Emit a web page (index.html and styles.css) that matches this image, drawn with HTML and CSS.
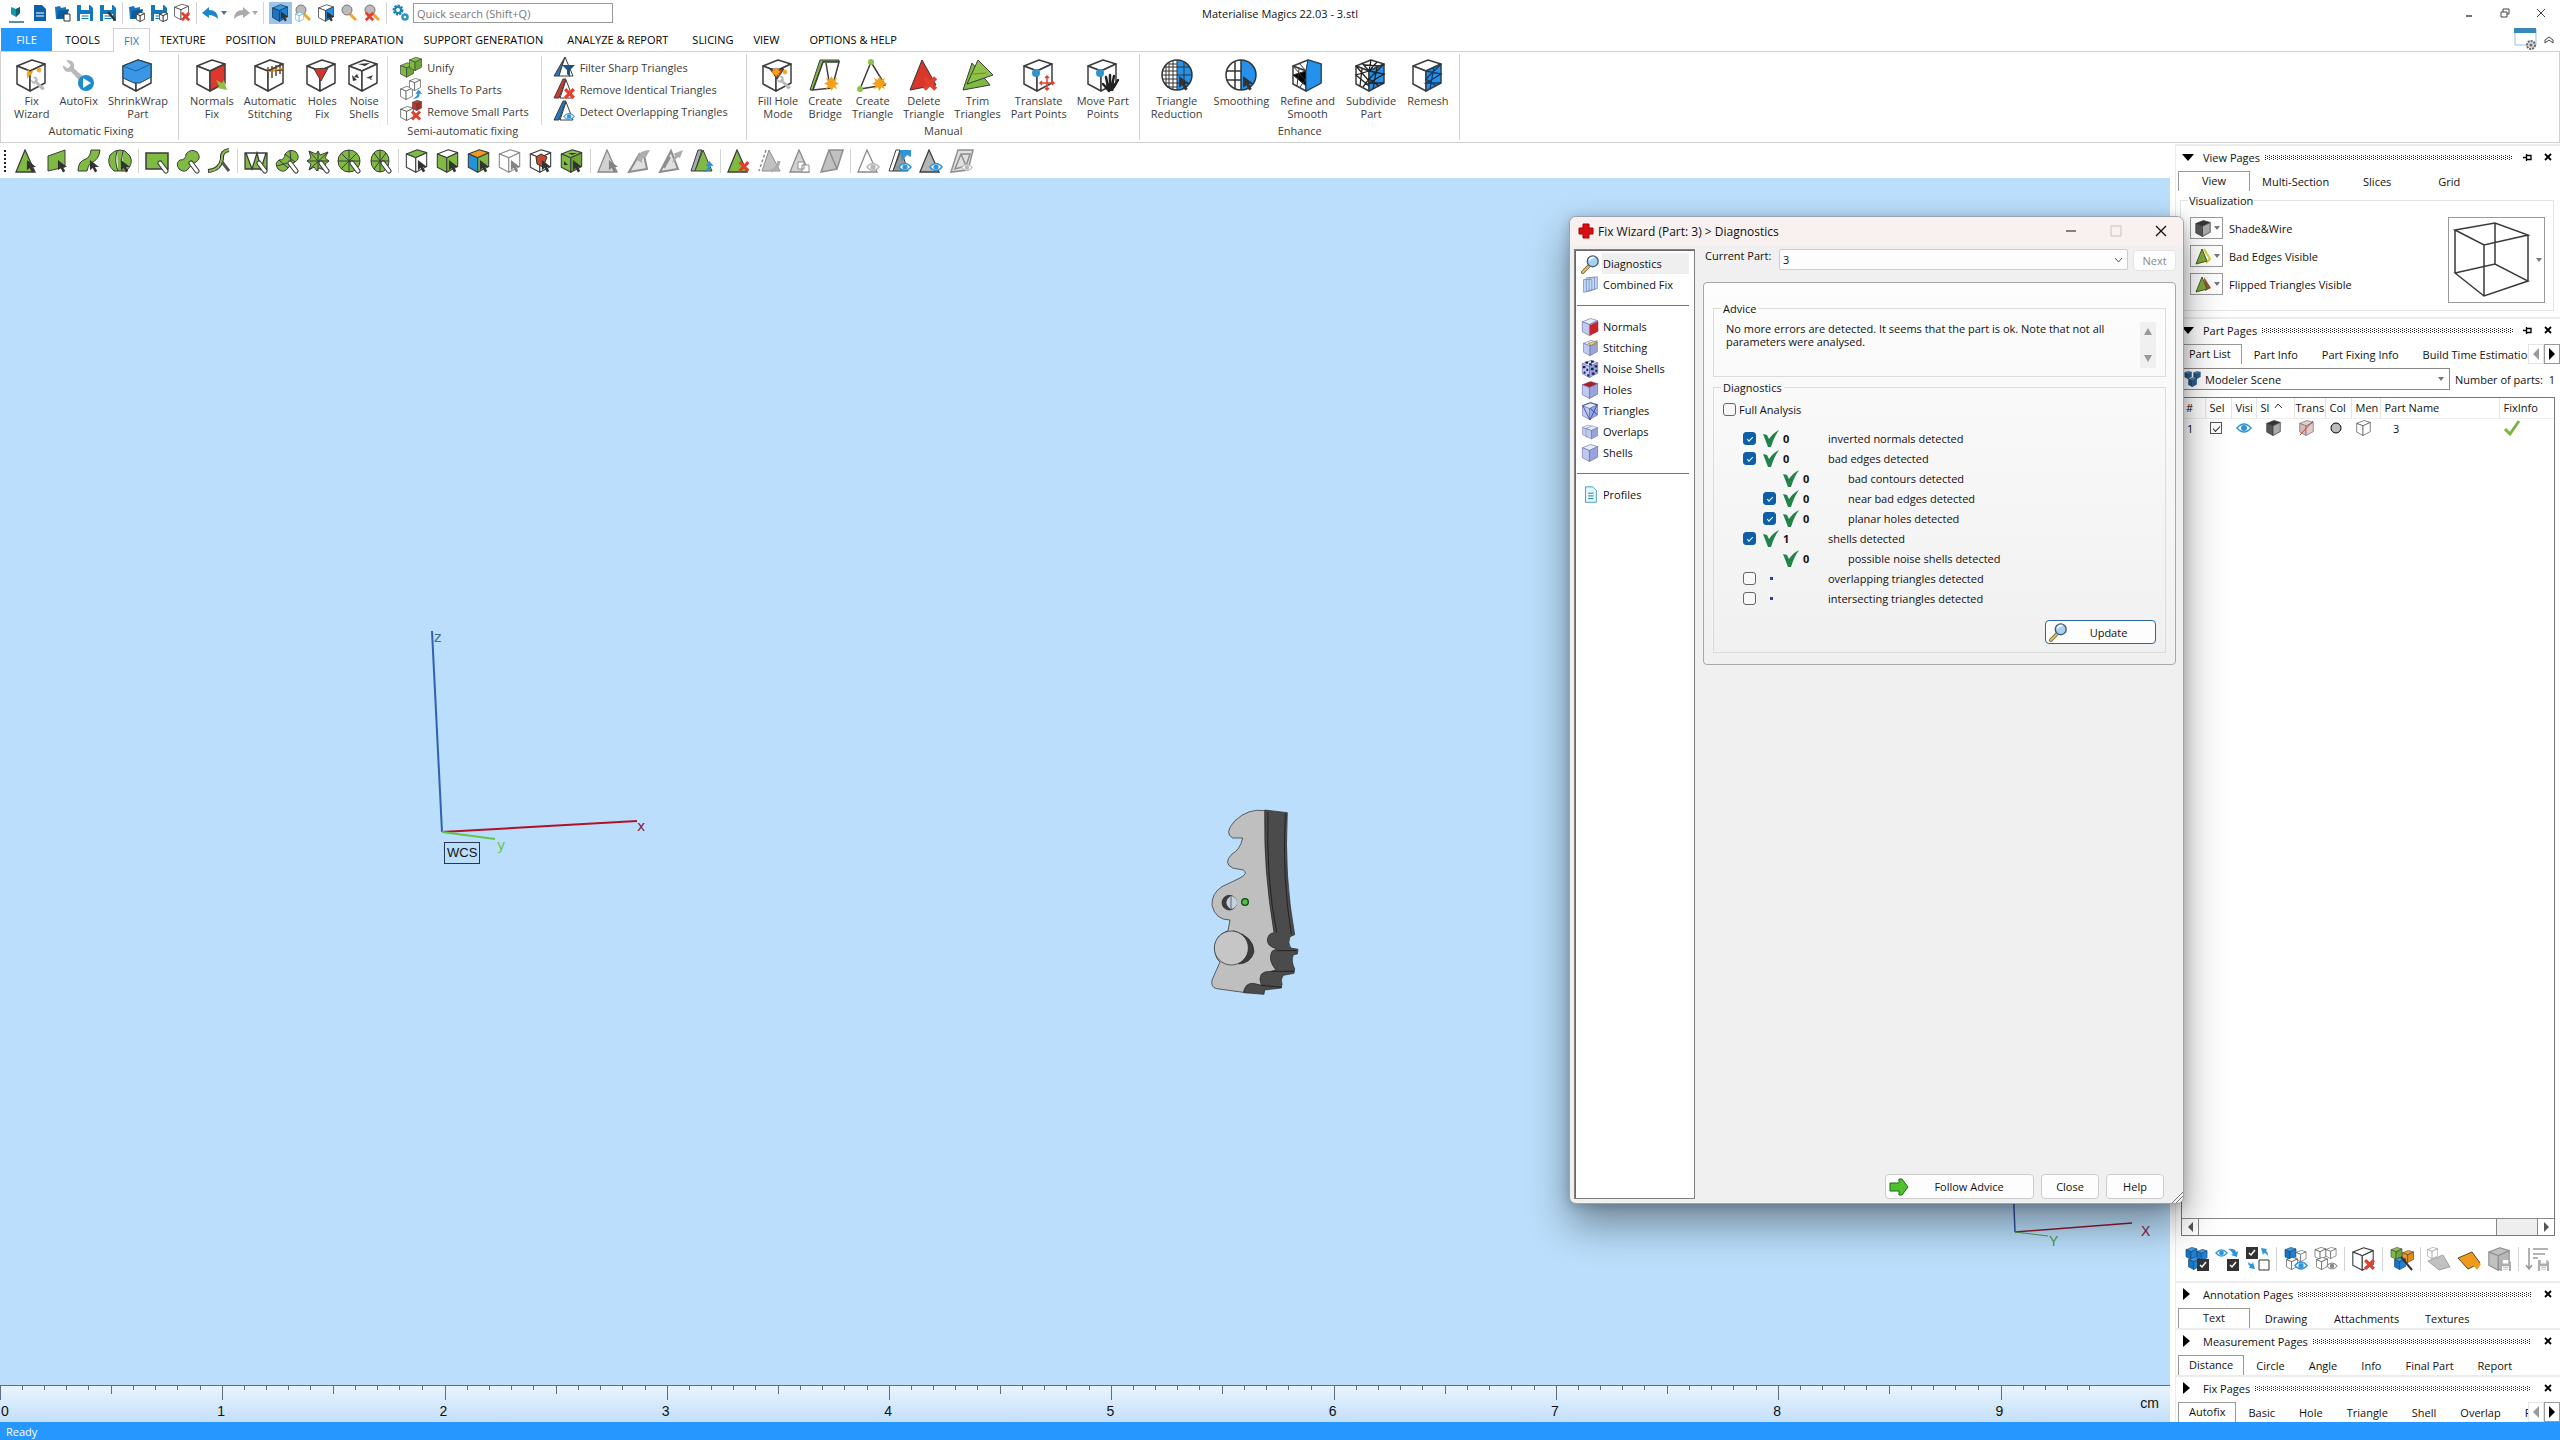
FILE: index.html
```html
<!DOCTYPE html>
<html lang="en">
<head>
    <meta charset="UTF-8">
    <meta name="viewport" content="width=device-width, initial-scale=1.0">
    <title>Materialise Magics 22.03 - 3.stl</title>
    <link rel="stylesheet" href="styles.css">
</head>
<body>
    <!-- Shared icon shapes -->
    <svg class="sprite" aria-hidden="true">
        <symbol id="cube" viewBox="0 0 30 33">
            <g stroke="var(--line, #3d3d3d)" stroke-width="var(--sw, 1.5)" stroke-linejoin="round">
                <path d="M16 1 L29 5 L14 12 L1 7 Z" fill="var(--top, #fff)"/>
                <path d="M1 7 L14 12 V32 L1 25 Z" fill="var(--left, #fff)"/>
                <path d="M14 12 L29 5 V24 L14 32 Z" fill="var(--right, #fff)"/>
            </g>
        </symbol>
        <symbol id="cursor" viewBox="0 0 12 14">
            <path d="M1 0 V11 L4 8.500 L6.500 13.500 L9 12 L6.500 7.500 H11 Z" fill="#333"/>
        </symbol>
        <symbol id="pen" viewBox="0 0 12 14">
            <path d="M3 3 L9 11" stroke="#333" stroke-width="5" stroke-linecap="round"/>
            <path d="M3 3 L9 11" stroke="#fff" stroke-width="3" stroke-linecap="round"/>
        </symbol>
        <symbol id="cross" viewBox="0 0 12 12">
            <path d="M2 2 L10 10 M10 2 L2 10" stroke="#e2402f" stroke-width="3"/>
        </symbol>
        <symbol id="star" viewBox="0 0 12 12">
            <path d="M6 0 L7.500 3 L10.500 1.500 L9 4.500 L12 6 L9 7.500 L10.500 10.500 L7.500 9 L6 12 L4.500 9 L1.500 10.500 L3 7.500 L0 6 L3 4.500 L1.500 1.500 L4.500 3 Z" fill="#f4a11c"/>
        </symbol>
        <symbol id="wrench" viewBox="0 0 16 16">
            <path d="M2 1 C5 0 8 2 7 6 L15 13 L12 15.500 L5 8 C2 9 0 7 0 4 L3 6 L5 4 Z" fill="#b9b9b9"/>
        </symbol>
        <symbol id="eye" viewBox="0 0 16 10">
            <path d="M1 5 Q8 -3 15 5 Q8 13 1 5 Z" fill="#fff" stroke="var(--eye, #2f95d8)" stroke-width="1.500"/>
            <circle cx="8" cy="5" r="3" fill="var(--eye, #2f95d8)"/>
        </symbol>
        <symbol id="tri" viewBox="0 0 24 24">
            <path d="M10 1 L1 23 H20 Z" fill="var(--fill, #7fba42)" stroke="var(--line, #3d3d3d)" stroke-width="1.300"/>
        </symbol>
        <symbol id="disk" viewBox="0 0 16 16">
            <path d="M0 0 H13 L16 3 V16 H0 Z" fill="var(--disk, #1279bd)"/>
            <path d="M4 0 H12 V5 H4 Z M3 9 H13 V16 H3 Z" fill="#fff"/>
            <path d="M4.500 11 H11.500 M4.500 13.500 H11.500" stroke="var(--disk, #1279bd)"/>
        </symbol>
        <symbol id="folder" viewBox="0 0 16 16">
            <path d="M1 3 L6 2 L7 4 L12 3 V6 H15 L12 15 H2 Z" fill="#1575bd"/>
            <path d="M4 7 L15 5 L12 14 L3 15 Z" fill="#0c5c9c"/>
        </symbol>
        <symbol id="lens" viewBox="0 0 16 18">
            <path d="M9 10 L15 16" stroke="#eda62b" stroke-width="3"/>
            <circle cx="6" cy="6" r="5" fill="var(--glass, #bbb)" stroke="#777"/>
        </symbol>
        <symbol id="magnifier" viewBox="0 0 20 22">
            <path d="M9 13 L2 20" stroke="#7d6b35" stroke-width="4" stroke-linecap="round"/>
            <path d="M9 13 L2 20" stroke="#e3c376" stroke-width="2" stroke-linecap="round"/>
            <circle cx="13" cy="8" r="6" fill="#a8d3f0" stroke="#44597a" stroke-width="1.500"/>
            <path d="M9 7 Q11 3 15 4" stroke="#fff" stroke-width="1.500" fill="none"/>
        </symbol>
        <symbol id="tick" viewBox="0 0 16 17">
            <path d="M0 4 L4 5 L6 9 Q10 3 16 0 Q11 7 8 17 H5 Z" fill="#23824a"/>
        </symbol>
        <symbol id="arrow" viewBox="0 0 12 12">
            <path d="M1 11 Q10 11 9 5 H12 L8 0 L4 5 H6.500 Q6.500 8 1 11 Z" fill="var(--arrow, #2f95d8)"/>
        </symbol>
        <symbol id="pin" viewBox="0 0 9 7">
            <path d="M0 3.500 H3 M3.500 0 V7 M4 1.500 H8 V5.500 H4" stroke="#000" stroke-width="1.300" fill="none"/>
        </symbol>
        <symbol id="close" viewBox="0 0 8 8">
            <path d="M1 1 L7 7 M7 1 L1 7" stroke="#000" stroke-width="1.800"/>
        </symbol>
        <symbol id="ticks" viewBox="0 0 100 14" preserveAspectRatio="none">
            <path d="M0 0 V14 M10 0 V4 M20 0 V4 M30 0 V4 M40 0 V4 M50 0 V8 M60 0 V4 M70 0 V4 M80 0 V4 M90 0 V4" stroke="#5c6f7c" vector-effect="non-scaling-stroke" shape-rendering="crispEdges"/>
        </symbol>
        <symbol id="ticks-last" viewBox="0 0 100 14" preserveAspectRatio="none">
            <path d="M0 0 V14 M10 0 V4 M20 0 V4 M30 0 V4 M40 0 V4" stroke="#5c6f7c" vector-effect="non-scaling-stroke" shape-rendering="crispEdges"/>
        </symbol>
    </svg>

    <div class="app">
        <header class="titlebar">
            <div class="quick">
                <svg viewBox="0 0 17 20"><path d="M1 19 H16" stroke="#1d6a8c" stroke-width="1.500"/><path d="M3 4 L8 6 L12 4 V10 L8 14 L3 11 Z" fill="#1797a8"/><path d="M8 6 L12 4 V10 L8 14 Z" fill="#0c5f78"/></svg>
                <svg viewBox="0 0 17 20"><path d="M3 2 H11 L15 6 V18 H3 Z" fill="#0f5ea8"/><path d="M5 10 H13 M5 13 H13" stroke="#fff"/></svg>
                <svg viewBox="0 0 17 20"><use href="#folder" width="16" height="18"/><path d="M10 11 H16 V18 H10 Z" fill="#fff" stroke="#333"/></svg>
                <svg viewBox="0 0 17 20"><use href="#disk" y="2" width="16" height="16"/></svg>
                <svg viewBox="0 0 17 20"><use href="#disk" y="2" width="16" height="16"/><path d="M8 9 L15 17" stroke="#333" stroke-width="2.500"/></svg>
                <span class="sep"></span>
                <svg viewBox="0 0 17 20"><use href="#folder" width="16" height="18"/><use href="#cube" x="8" y="9" width="9" height="10" class="thick"/></svg>
                <svg viewBox="0 0 17 20"><use href="#disk" y="2" width="16" height="16"/><use href="#cube" x="8" y="9" width="9" height="10" class="thick"/></svg>
                <svg viewBox="0 0 17 20"><use href="#cube" width="15" height="18"/><use href="#cross" x="6" y="8" width="11" height="11"/></svg>
                <span class="sep"></span>
                <svg viewBox="0 0 17 20"><path d="M0 10 L7 4 V7 Q16 7 16 16 Q12 12 7 12 V15 Z" fill="#1d86cf"/></svg>
                <span class="caret blue"></span>
                <svg viewBox="0 0 17 20"><path d="M17 10 L10 4 V7 Q1 7 1 16 Q5 12 10 12 V15 Z" fill="#aaa"/></svg>
                <span class="caret grey"></span>
                <span class="sep"></span>
                <span class="picked"><svg viewBox="0 0 17 20"><use href="#cube" y="1" width="16" height="18" class="blue-cube"/><use href="#cursor" x="8" y="8" width="9" height="11"/></svg></span>
                <svg viewBox="0 0 17 20"><use href="#lens" y="1" width="16" height="18"/><use href="#cube" y="9" width="9" height="10" class="sky-line"/></svg>
                <svg viewBox="0 0 17 20"><use href="#cube" y="1" width="16" height="18" class="blue-side"/><use href="#cursor" x="8" y="8" width="9" height="11"/></svg>
                <svg viewBox="0 0 17 20"><use href="#lens" y="1" width="16" height="18"/></svg>
                <svg viewBox="0 0 17 20"><use href="#lens" y="1" width="16" height="18"/><use href="#cross" y="8" width="11" height="11"/></svg>
                <span class="sep"></span>
                <svg viewBox="0 0 17 20"><circle cx="6" cy="7" r="4" fill="none" stroke="#1d86b0" stroke-width="3" stroke-dasharray="2 1"/><circle cx="6" cy="7" r="3" fill="none" stroke="#1d86b0" stroke-width="2"/><circle cx="13" cy="14" r="2.500" fill="none" stroke="#2f95c8" stroke-width="2.500"/></svg>
                <input class="search" type="text" placeholder="Quick search (Shift+Q)" aria-label="Quick search">
            </div>
            <div class="app-title">Materialise Magics 22.03 - 3.stl</div>
            <div class="win-buttons">
                <button aria-label="Minimize"><svg viewBox="0 0 10 10"><path d="M2 8 H8" stroke="#444" stroke-width="1.500"/></svg></button>
                <button aria-label="Restore"><svg viewBox="0 0 10 10"><path d="M1 4 H7 V9 H1 Z M3 4 V1 H9 V6 H7" fill="none" stroke="#444"/></svg></button>
                <button aria-label="Close"><svg viewBox="0 0 10 10"><path d="M1 1 L9 9 M9 1 L1 9" stroke="#444"/></svg></button>
            </div>
        </header>

        <nav class="tabs">
            <button class="tab file">FILE</button>
            <button class="tab tools-tab">TOOLS</button>
            <button class="tab active">FIX</button>
            <button class="tab">TEXTURE</button>
            <button class="tab">POSITION</button>
            <button class="tab">BUILD PREPARATION</button>
            <button class="tab">SUPPORT GENERATION</button>
            <button class="tab analyze">ANALYZE &amp; REPORT</button>
            <button class="tab">SLICING</button>
            <button class="tab">VIEW</button>
            <button class="tab options">OPTIONS &amp; HELP</button>
            <div class="tabs-right">
                <svg width="24" height="23" viewBox="0 0 24 23"><path d="M1 1 H22 V17 H1 Z" fill="#fff" stroke="#8cc4e6"/><path d="M0 0 H22 V5 H0 Z" fill="#3a87bd"/><circle cx="17" cy="17" r="4" fill="#ddd" stroke="#666" stroke-width="2" stroke-dasharray="2 1"/><circle cx="17" cy="17" r="1.500" fill="#666"/></svg>
                <svg width="10" height="8" viewBox="0 0 10 8"><path d="M1 4 L5 1 L9 4 V7 L5 4 L1 7 Z" fill="none" stroke="#444"/></svg>
            </div>
        </nav>

        <section class="ribbon">
            <div class="group first">
                <div class="tools">
                    <button class="big"><svg viewBox="0 0 32 33"><use href="#cube" width="30" height="33"/><path d="M12 10 L14 13 L17 11 L16 15 L13 17 L11 20 L11 14 Z" fill="#f4a11c"/><use href="#star" x="20" y="8" width="6" height="6"/><use href="#wrench" x="15" y="17" width="15" height="15"/></svg>Fix<br>Wizard</button>
                    <button class="big"><svg viewBox="0 0 32 33"><use href="#wrench" x="-1" y="0" width="27" height="25"/><circle cx="23" cy="24" r="8" fill="#1c8bd0"/><path d="M20 19 L28 24 L20 29 Z" fill="#fff"/></svg>AutoFix</button>
                    <button class="big"><svg viewBox="0 0 32 33"><use href="#cube" width="30" height="33"/><path d="M1 7 L16 1 L29 5 V18 L18 24 H12 L1 19 Z" fill="#3b97e6" stroke="#245"/><path d="M1 7 L14 12 L29 5" fill="none" stroke="#1d5f9c"/></svg>ShrinkWrap<br>Part</button>
                </div>
                <div class="group-title">Automatic Fixing</div>
            </div>

            <div class="group">
                <div class="tools">
                    <button class="big"><svg viewBox="0 0 32 33"><use href="#cube" width="30" height="33" class="red-side"/><path d="M20 21 L26 24 L28 21 L31 31 L21 29 L23 27 Z" fill="#8bc34a"/></svg>Normals<br>Fix</button>
                    <button class="big"><svg viewBox="0 0 32 33"><use href="#cube" width="30" height="33"/><path d="M13 12 L29 11 M14 8 V19 M18 7 V19 M22 6 V17 M26 5 V15" stroke="#5d4630" stroke-width="1.500"/><path d="M14 13 L29 9" stroke="#f4a11c"/></svg>Automatic<br>Stitching</button>
                    <button class="big"><svg viewBox="0 0 32 33"><use href="#cube" width="30" height="33"/><path d="M8 10 L22 9 L15 22 Z" fill="#d4352a" stroke="#3d3d3d"/></svg>Holes<br>Fix</button>
                    <button class="big"><svg viewBox="0 0 32 33"><use href="#cube" width="30" height="33"/><path d="M10 5 L22 4 L17 7 Z M4 16 L9 21 L5 22 Z M9 15 L11 19 L6 18 Z M18 19 L25 16 L22 21 L25 20 Z" fill="#333"/></svg>Noise<br>Shells</button>
                    <div class="small-list">
                        <button class="small"><svg viewBox="0 0 22 22"><use href="#cube" x="0" y="6" width="14" height="16" class="green-cube"/><use href="#cube" x="9" y="0" width="13" height="16" class="green-cube"/></svg>Unify</button>
                        <button class="small"><svg viewBox="0 0 22 22"><use href="#cube" x="0" y="8" width="13" height="14"/><use href="#cube" x="9" y="0" width="12" height="13"/><use href="#arrow" x="12" y="11" width="10" height="11"/></svg>Shells To Parts</button>
                        <button class="small"><svg viewBox="0 0 22 22"><use href="#cube" x="0" y="6" width="14" height="15"/><use href="#cube" x="12" y="0" width="10" height="11" class="red-cube"/><use href="#cross" x="10" y="9" width="12" height="13"/></svg>Remove Small Parts</button>
                    </div>
                    <div class="small-list">
                        <button class="small"><svg viewBox="0 0 22 22"><path d="M12 1 L1 20 H6 Z" fill="#2d74b5" stroke="#3d3d3d"/><path d="M12 1 L6 20 H20 Z" fill="#fff" stroke="#3d3d3d"/><path d="M9 9 H22 L17 14 V21 L14 18 V14 Z" fill="#1b5288"/></svg>Filter Sharp Triangles</button>
                        <button class="small"><svg viewBox="0 0 22 22"><path d="M10 1 L1 20 H6 L13 1 Z" fill="#c93a30" stroke="#3d3d3d"/><path d="M13 2 L7 20 H20 Z" fill="#fff" stroke="#3d3d3d"/><use href="#cross" x="10" y="9" width="13" height="13"/></svg>Remove Identical Triangles</button>
                        <button class="small"><svg viewBox="0 0 22 22"><path d="M10 1 L1 20 H6 L13 1 Z" fill="#2478bd" stroke="#3d3d3d"/><path d="M13 2 L7 20 H20 Z" fill="#fff" stroke="#3d3d3d"/><use href="#eye" x="10" y="12" width="12" height="9"/></svg>Detect Overlapping Triangles</button>
                    </div>
                </div>
                <div class="group-title">Semi-automatic fixing</div>
            </div>

            <div class="group">
                <div class="tools">
                    <button class="big"><svg viewBox="0 0 32 33"><use href="#cube" width="30" height="33"/><path d="M8 10 L22 10 L15 20 Z" fill="#c0392b" stroke="#333"/><use href="#star" x="9" y="8" width="10" height="10"/><use href="#star" x="20" y="10" width="6" height="6"/><use href="#wrench" x="15" y="16" width="15" height="15"/></svg>Fill Hole<br>Mode</button>
                    <button class="big"><svg viewBox="0 0 32 33"><path d="M11 1 L1 31 L4 31 L14 3 H30 V1 Z" fill="#7fba42" stroke="#3d3d3d"/><path d="M14 3 L4 31 L23 29 L30 3 Z M17 4 L20 22" fill="#fff" stroke="#3d3d3d" stroke-width="1.500"/><use href="#star" x="15" y="17" width="15" height="15"/></svg>Create<br>Bridge</button>
                    <button class="big"><svg viewBox="0 0 32 33"><path d="M14 3 L3 30 L28 26 Z" fill="#fff" stroke="#3d3d3d" stroke-width="1.500"/><circle cx="14" cy="3" r="3" fill="#8bc34a"/><circle cx="3" cy="30" r="3" fill="#8bc34a"/><use href="#star" x="15" y="17" width="15" height="15"/></svg>Create<br>Triangle</button>
                    <button class="big"><svg viewBox="0 0 32 33"><path d="M14 1 L2 31 L28 26 Z" fill="#d8362b" stroke="#333"/><use href="#cross" x="13" y="16" width="18" height="17"/></svg>Delete<br>Triangle</button>
                    <button class="big"><svg viewBox="0 0 32 33"><path d="M10 4 L1 31 L28 26 Z" fill="#7fba42" stroke="#3d3d3d"/><path d="M16 1 L5 25 L31 16 Z" fill="#8bc34a" stroke="#3d3d3d"/><path d="M11 15 L24 14" stroke="#c60"/></svg>Trim<br>Triangles</button>
                    <button class="big"><svg viewBox="0 0 32 33"><use href="#cube" width="30" height="33"/><circle cx="13" cy="14" r="4" fill="#2f95c8"/><path d="M24 17 V31 M17 24 H31 M22 19 L24 17 L26 19 M22 29 L24 31 L26 29 M19 22 L17 24 L19 26 M29 22 L31 24 L29 26" fill="none" stroke="#e2402f" stroke-width="1.500"/></svg>Translate<br>Part Points</button>
                    <button class="big"><svg viewBox="0 0 32 33"><use href="#cube" width="30" height="33"/><circle cx="13" cy="14" r="4" fill="#2f95c8"/><path d="M22 32 L16 25 M21 28 L19 18 M23 27 L23 16 M25 27 L27 17 M27 28 L31 21" stroke="#222" stroke-width="2.500" stroke-linecap="round"/><path d="M19 25 H29 L26 32 H22 Z" fill="#222"/></svg>Move Part<br>Points</button>
                </div>
                <div class="group-title">Manual</div>
            </div>

            <div class="group last">
                <div class="tools">
                    <button class="big"><svg viewBox="0 0 32 33"><circle cx="16" cy="16" r="15" fill="#fff"/><path d="M16 1 A15 15 0 0 1 16 31 Z" fill="#2492ec"/><circle cx="16" cy="16" r="15" fill="none" stroke="#333" stroke-width="1.500"/><path d="M16 1 V31 M1 16 H31 M4 8 H28 M4 24 H28 M23 3 V29 M8 4 V28 M12 2 V30 M5 7 V26 M2 12 H16 M2 20 H16 M6 28 H16 M8 5 H16" stroke="#333"/><use href="#cursor" x="17" y="16" width="13" height="17"/></svg>Triangle<br>Reduction</button>
                    <button class="big"><svg viewBox="0 0 32 33"><circle cx="16" cy="16" r="15" fill="#fff"/><path d="M16 1 A15 15 0 0 1 16 31 Z" fill="#2492ec"/><circle cx="16" cy="16" r="15" fill="none" stroke="#333" stroke-width="1.500"/><path d="M16 1 V31 M1 12 H16 M2 21 H16 M10 2 V30" stroke="#333" stroke-width="1.500"/><use href="#cursor" x="17" y="16" width="13" height="17"/></svg>Smoothing</button>
                    <button class="big"><svg viewBox="0 0 32 33"><use href="#cube" width="30" height="33" class="blue-side"/><path d="M16 1 L14 12 M7 4 L14 12 M1 7 L14 22 M14 12 L1 16 L14 27 M7 10 L5 27 M14 20 L8 28" stroke="#333"/><path d="M14 12 L16 1 L29 5 V24 L14 32 Z" fill="#2492ec" stroke="#245"/></svg>Refine and<br>Smooth</button>
                    <button class="big"><svg viewBox="0 0 32 33"><use href="#cube" width="30" height="33" class="blue-side"/><path d="M16 1 L14 12 M7 4 L14 12 M22 3 L14 12 M9 6 L24 7 M1 7 L14 22 M14 12 L1 16 L14 27 M7 10 L5 27 M14 20 L8 28 M14 12 L29 15 L14 24 L29 24 M22 8 L18 30 M29 5 L14 20 L24 27" stroke="#222" stroke-width="1.300" fill="none"/></svg>Subdivide<br>Part</button>
                    <button class="big"><svg viewBox="0 0 32 33"><use href="#cube" width="30" height="33" class="blue-side"/><path d="M14 12 L29 15 L14 24 L29 24 M22 8 L18 30 M29 5 L14 20 L24 27" stroke="#123a63" stroke-width="1.300" fill="none"/></svg>Remesh</button>
                </div>
                <div class="group-title">Enhance</div>
            </div>
        </section>

        <div class="markbar">
            <span class="grip"></span>
            <svg viewBox="0 0 24 24"><use href="#tri" width="24" height="24"/><use href="#cursor" x="11" y="11" width="11" height="13"/></svg>
            <svg viewBox="0 0 24 24"><path d="M2 7 L19 1 V18 L2 22 Z" fill="#7fba42" stroke="#3d3d3d"/><use href="#cursor" x="11" y="11" width="11" height="13"/></svg>
            <svg viewBox="0 0 24 24"><path d="M14 1 H23 Q22 11 14 14 Q11 16 10 22 H1 Q1 12 9 10 Q13 8 14 1 Z" fill="#7fba42" stroke="#3d3d3d"/><use href="#cursor" x="12" y="11" width="11" height="13"/></svg>
            <svg viewBox="0 0 24 24"><path d="M7 2 Q12 0 17 2 L22 7 Q26 15 18 22 H6 Q-2 15 2 6 Z M9 2 Q6 12 10 22 M15 2 Q12 12 14 22" fill="#7fba42" stroke="#3d3d3d"/><use href="#cursor" x="12" y="11" width="11" height="13"/></svg>
            <span class="sep"></span>
            <svg viewBox="0 0 24 24"><path d="M1 4 H23 V20 H1 Z" fill="#7fba42" stroke="#3d3d3d" stroke-width="1.500"/><use href="#pen" x="12" y="11" width="12" height="14"/></svg>
            <svg viewBox="0 0 24 24"><path d="M10 5 Q15 -1 21 3 Q26 9 20 13 Q15 15 13 19 Q9 25 3 20 Q-1 14 4 11 Q10 11 10 5 Z" fill="#7fba42" stroke="#3d3d3d"/><use href="#pen" x="12" y="11" width="12" height="14"/></svg>
            <svg viewBox="0 0 24 24"><path d="M22 1 Q14 2 15 10 Q13 21 1 22" fill="none" stroke="#3d3d3d" stroke-width="4"/><path d="M22 1 Q14 2 15 10 Q13 21 2 22" fill="none" stroke="#8bc34a" stroke-width="2"/><path d="M15 13 L22 22" stroke="#555" stroke-width="3"/></svg>
            <span class="sep"></span>
            <svg viewBox="0 0 24 24"><path d="M1 4 H23 V20 H1 Z M2 4 L8 20 L13 4 L17 20 L22 4" fill="#7fba42" stroke="#3d3d3d" stroke-width="1.300"/><use href="#pen" x="12" y="11" width="12" height="14"/></svg>
            <svg viewBox="0 0 24 24"><path d="M10 5 Q15 -1 21 3 Q26 9 20 13 Q15 15 13 19 Q9 25 3 20 Q-1 14 4 11 Q10 11 10 5 Z M10 5 L20 13 M15 1 L16 14 M4 11 L13 19 M2 17 L12 14" fill="#7fba42" stroke="#3d3d3d"/><use href="#pen" x="12" y="11" width="12" height="14"/></svg>
            <svg viewBox="0 0 24 24"><path d="M3 2 L10 5 L12 2 L14 6 L22 3 L19 9 L23 12 L19 15 L21 22 L13 19 L11 22 L8 18 L3 21 L5 15 L1 12 L5 9 Z M3 2 L21 22 M22 3 L3 21 M12 2 V22 M1 12 H23" fill="#7fba42" stroke="#3d3d3d"/><use href="#pen" x="12" y="11" width="12" height="14"/></svg>
            <svg viewBox="0 0 24 24"><circle cx="12" cy="12" r="11" fill="#7fba42" stroke="#3d3d3d"/><path d="M12 1 V23 M1 12 H23 M4 4 L20 20 M20 4 L4 20" stroke="#3d3d3d"/><use href="#pen" x="12" y="11" width="12" height="14"/></svg>
            <svg viewBox="0 0 24 24"><ellipse cx="12" cy="12" rx="9" ry="11" fill="#7fba42" stroke="#3d3d3d"/><path d="M12 1 V23 M3 12 H21 M6 4 L18 20 M18 4 L6 20" stroke="#3d3d3d"/><use href="#pen" x="12" y="11" width="12" height="14"/></svg>
            <span class="sep"></span>
            <svg viewBox="0 0 24 24"><use href="#cube" width="23" height="24" class="green-top"/><use href="#cursor" x="12" y="11" width="11" height="13"/></svg>
            <svg viewBox="0 0 24 24"><use href="#cube" width="23" height="24" class="green-sides"/><use href="#cursor" x="12" y="11" width="11" height="13"/></svg>
            <svg viewBox="0 0 24 24"><use href="#cube" width="23" height="24" class="multi"/><use href="#cursor" x="12" y="11" width="11" height="13"/></svg>
            <svg viewBox="0 0 24 24" class="dim"><use href="#cube" width="23" height="24"/><use href="#cursor" x="12" y="11" width="11" height="13"/></svg>
            <svg viewBox="0 0 24 24"><use href="#cube" width="23" height="24"/><path d="M7 8 L12 5 L18 8 L14 18 L8 15 Z" fill="#c9492b" stroke="#333"/><use href="#cursor" x="12" y="11" width="11" height="13"/></svg>
            <svg viewBox="0 0 24 24"><use href="#cube" width="23" height="24" class="green-cube"/><path d="M8 4 L17 4 L12 6 Z M4 12 L8 16 L4 16 Z" fill="#333"/><use href="#cursor" x="12" y="11" width="11" height="13"/></svg>
            <span class="sep"></span>
            <svg viewBox="0 0 24 24" class="dim"><use href="#tri" width="24" height="24" class="grey-fill"/><use href="#cursor" x="11" y="11" width="11" height="13"/></svg>
            <svg viewBox="0 0 24 24" class="dim"><path d="M12 4 L1 23 L19 20 L16 6" fill="#ccc" stroke="#444" stroke-width="2"/><path d="M9 11 Q10 1 22 1 L18 8 Q13 8 14 14 Z" fill="#777"/></svg>
            <svg viewBox="0 0 24 24" class="dim"><path d="M12 2 L1 23 L19 20 Z M11 8 L5 19" fill="#ccc" stroke="#444" stroke-width="2"/><path d="M13 14 L16 6 L14 5 L24 1 L21 9 L19 8 Z" fill="#777"/></svg>
            <svg viewBox="0 0 24 24"><path d="M8 1 L1 22 H5 L12 1 Z" fill="#aaa" stroke="#3d3d3d"/><path d="M13 1 L5 22 H22 Z" fill="#7fba42" stroke="#3d3d3d"/><use href="#arrow" x="11" y="12" width="13" height="12"/></svg>
            <span class="sep"></span>
            <svg viewBox="0 0 24 24"><use href="#tri" width="24" height="24"/><use href="#cross" x="10" y="11" width="14" height="13"/></svg>
            <svg viewBox="0 0 24 24" class="dim"><path d="M8 1 L1 22" stroke="#444" stroke-dasharray="3 2" stroke-width="1.500"/><path d="M11 1 L4 22 H22 Z" fill="#999" stroke="#444"/><path d="M13 22 Q20 20 21 12" stroke="#777" stroke-width="3" fill="none"/></svg>
            <svg viewBox="0 0 24 24" class="dim"><use href="#tri" width="24" height="24" class="grey-fill"/><path d="M9 13 H15 V20 H9 Z M13 16 H20 V23 H13 Z" fill="#fff" stroke="#444"/></svg>
            <svg viewBox="0 0 24 24" class="dim"><path d="M9 1 H23 L17 20 L1 23 Z M9 1 L17 20" fill="#999" stroke="#444" stroke-width="1.500"/></svg>
            <span class="sep"></span>
            <svg viewBox="0 0 24 24" class="dim"><use href="#tri" width="24" height="24" class="no-fill"/><use href="#eye" x="9" y="13" width="14" height="10" class="grey-eye"/></svg>
            <svg viewBox="0 0 24 24"><path d="M8 1 L1 22 H5 L12 1 Z" fill="#fff" stroke="#3d3d3d"/><path d="M13 1 L5 22 H20 Z" fill="#999" stroke="#3d3d3d"/><path d="M12 1 H23 V8 L19 6 L14 12 L13 7 Z" fill="#2f95d8"/><use href="#eye" x="10" y="13" width="14" height="10"/></svg>
            <svg viewBox="0 0 24 24"><use href="#tri" width="24" height="24" class="grey-fill"/><use href="#eye" x="10" y="13" width="14" height="10"/></svg>
            <svg viewBox="0 0 24 24" class="dim"><path d="M8 1 H23 L18 21 L1 23 Z M11 5 H20 L16 17 L5 20 Z M11 5 L16 17" fill="#ccc" stroke="#444" stroke-width="1.500"/><use href="#eye" x="11" y="14" width="12" height="9" class="grey-eye"/></svg>
        </div>

        <main class="workspace">
            <div class="viewport">
                <svg class="axes" width="230" height="240" viewBox="0 0 230 240">
                    <path d="M12 3 L22 204" stroke="#2f62b0" stroke-width="2"/>
                    <path d="M22 204 L217 193" stroke="#b01228" stroke-width="2"/>
                    <path d="M22 204 L75 211" stroke="#62c64a" stroke-width="2"/>
                    <text x="14" y="14" fill="#3a6fa0">z</text>
                    <text x="217" y="203" fill="#8c1c30">x</text>
                    <text x="77" y="222" fill="#62c64a">y</text>
                </svg>
                <span class="wcs">WCS</span>

                <svg class="part" width="150" height="230" viewBox="0 0 450 690">
                    <g stroke="#222" stroke-width="2" stroke-linejoin="round">
                        <path d="M254 90 L322 98 Q312 290 344 464 L330 470 Q322 490 332 504 L354 508 L352 522 L340 524 Q332 545 344 566 L342 580 L310 586 Q300 600 306 612 L304 624 L254 630 L252 643 L190 638 L260 400 Z" fill="#4b4b4b"/>
                        <path d="M254 92 Q205 84 165 122 Q130 160 158 174 H188 Q180 210 156 222 Q128 250 158 264 L190 270 Q206 280 180 294 L126 320 Q94 340 96 376 Q106 420 150 420 L144 452 Q104 466 104 506 Q106 536 120 546 L96 600 Q92 622 110 626 L190 637 Q196 608 220 610 Q230 612 244 616 Q228 572 274 574 L288 570 Q262 540 276 514 L290 506 Q262 500 262 480 Q264 460 282 458 Q250 270 254 92 Z" fill="#bfbfbf"/>
                        <path d="M160 452 Q222 470 222 516 Q212 550 176 552" fill="#3c3c3c"/>
                        <circle cx="154" cy="504" r="51" fill="#c6c6c6"/>
                        <circle cx="148" cy="368" r="22" fill="#3c3c3c"/>
                    </g>
                    <path d="M152 348 A19 19 0 0 1 152 387 Q126 368 152 348 Z" fill="#c4d2de"/>
                    <path d="M153 348 V387" stroke="#333" stroke-width="2"/>
                    <path d="M264 96 Q258 300 290 458 M316 100 Q306 300 334 462 M290 512 H350 M274 574 H342 M244 616 L304 622" stroke="#222" stroke-width="3" fill="none"/>
                    <circle cx="195" cy="366" r="10" fill="#49c043" stroke="#134a12" stroke-width="4"/>
                </svg>

                <svg class="mini-axes" width="150" height="100" viewBox="0 0 150 100">
                    <path d="M10 10 L13 82" stroke="#2f50a8" stroke-width="1.500"/>
                    <path d="M13 82 L130 73" stroke="#8c1c30" stroke-width="1.500"/>
                    <path d="M13 82 L46 86" stroke="#4aa04a"/>
                    <text x="139" y="86" fill="#8c1c40">X</text>
                    <text x="47" y="96" fill="#4aa04a">Y</text>
                </svg>

                <div class="ruler">
                    <div class="mark zero"><svg><use href="#ticks"/></svg><span>0</span></div>
                    <div class="mark"><svg><use href="#ticks"/></svg><span>1</span></div>
                    <div class="mark"><svg><use href="#ticks"/></svg><span>2</span></div>
                    <div class="mark"><svg><use href="#ticks"/></svg><span>3</span></div>
                    <div class="mark"><svg><use href="#ticks"/></svg><span>4</span></div>
                    <div class="mark"><svg><use href="#ticks"/></svg><span>5</span></div>
                    <div class="mark"><svg><use href="#ticks"/></svg><span>6</span></div>
                    <div class="mark"><svg><use href="#ticks"/></svg><span>7</span></div>
                    <div class="mark"><svg><use href="#ticks"/></svg><span>8</span></div>
                    <div class="mark"><svg><use href="#ticks-last"/></svg><span>9</span></div>
                    <span class="unit">cm</span>
                </div>
            </div>

            <aside class="pages">
                <section class="page">
                    <h2 class="page-head open">View Pages<i class="dots"></i><svg class="pin"><use href="#pin"/></svg><svg class="x"><use href="#close"/></svg></h2>
                    <div class="page-tabs wide">
                        <button class="on">View</button><button>Multi-Section</button><button>Slices</button><button>Grid</button>
                    </div>
                    <fieldset class="visual">
                        <legend>Visualization</legend>
                        <div class="modes">
                            <div class="mode"><button aria-label="Shading mode"><svg viewBox="0 0 16 17"><use href="#cube" width="16" height="17" class="dark-cube"/></svg><span class="caret"></span></button>Shade&amp;Wire</div>
                            <div class="mode"><button aria-label="Bad edges"><svg viewBox="0 0 16 17"><path d="M9 1 L15 11 L11 15" fill="none" stroke="#d8d23a" stroke-width="2"/><path d="M7 1 L1 16 L12 13 Z" fill="#7fa93a" stroke="#4a5a2a"/></svg><span class="caret"></span></button>Bad Edges Visible</div>
                            <div class="mode"><button aria-label="Flipped triangles"><svg viewBox="0 0 16 17"><path d="M9 1 L16 12 L10 15 Z" fill="#a0522d"/><path d="M7 1 L1 16 L12 13 Z" fill="#7fa93a" stroke="#4a5a2a"/></svg><span class="caret"></span></button>Flipped Triangles Visible</div>
                        </div>
                        <button class="orient" aria-label="Orientation">
                            <svg width="76" height="76" viewBox="0 0 76 76"><path d="M1 8 L41 1 L74 13 L30 23 Z M1 51 L41 42 L74 59 L30 74 Z M1 8 V51 M41 1 V42 M74 13 V59 M30 23 V74" fill="none" stroke="#3a3a3a" stroke-width="1.500"/></svg>
                            <span class="caret"></span>
                        </button>
                    </fieldset>
                </section>

                <section class="page parts">
                    <h2 class="page-head open">Part Pages<i class="dots"></i><svg class="pin"><use href="#pin"/></svg><svg class="x"><use href="#close"/></svg></h2>
                    <div class="page-tabs">
                        <button class="on">Part List</button><button>Part Info</button><button>Part Fixing Info</button><button>Build Time Estimation</button>
                        <span class="scrollers"><button class="off" aria-label="Previous"></button><button aria-label="Next"></button></span>
                    </div>
                    <div class="scene-row">
                        <label class="scene">
                            <svg viewBox="0 0 20 18"><use href="#cube" width="9" height="9" class="navy"/><use href="#cube" x="10" width="9" height="9" class="navy"/><use href="#cube" x="4" y="7" width="11" height="11" class="navy"/></svg>
                            <select aria-label="Scene"><option>Modeler Scene</option></select>
                            <span class="caret"></span>
                        </label>
                        <span>Number of parts:&nbsp; 1</span>
                    </div>
                    <div class="list">
                        <table>
                            <thead>
                                <tr><th class="w23">#</th><th class="w26">Sel</th><th class="w25">Visi</th><th class="w38">Sl&nbsp;&nbsp;<svg width="7" height="4" viewBox="0 0 7 4"><path d="M0 4 L3 0 L7 4" fill="none" stroke="#333"/></svg></th><th class="w31">Trans</th><th class="w26">Col</th><th class="w29">Men</th><th class="w119">Part Name</th><th>FixInfo</th></tr>
                            </thead>
                            <tbody>
                                <tr>
                                    <td>1</td>
                                    <td><input type="checkbox" class="square" checked aria-label="Selected"></td>
                                    <td><svg width="16" height="10"><use href="#eye"/></svg></td>
                                    <td class="mid"><svg width="15" height="16"><use href="#cube" class="dark-cube"/></svg></td>
                                    <td><svg width="15" height="16" viewBox="0 0 15 16"><use href="#cube" width="15" height="16" class="rose"/><path d="M1 15 L14 1" stroke="#d04030"/></svg></td>
                                    <td><svg width="12" height="12" viewBox="0 0 12 12"><circle cx="6" cy="6" r="5" fill="#bbb" stroke="#000"/></svg></td>
                                    <td><svg width="15" height="16"><use href="#cube" class="light-line"/></svg></td>
                                    <td class="name">3</td>
                                    <td><svg width="17" height="17" viewBox="0 0 17 17"><path d="M1 9 L6 14 L15 1" fill="none" stroke="#7cb342" stroke-width="3"/></svg></td>
                                </tr>
                            </tbody>
                        </table>
                        <div class="hscroll"><button class="left" aria-label="Scroll left"></button><span class="thumb"></span><span class="track"></span><button class="right" aria-label="Scroll right"></button></div>
                    </div>
                    <div class="part-tools">
                        <svg viewBox="0 0 24 24"><use href="#cube" width="13" height="13" class="blue-cube"/><use href="#cube" x="11" y="2" width="12" height="12" class="blue-cube"/><use href="#cube" x="3" y="10" width="12" height="13" class="blue-cube"/><path d="M12 12 H24 V24 H12 Z" fill="#333"/><path d="M15 18 L17 20 L21 15" fill="none" stroke="#fff" stroke-width="1.500"/></svg>
                        <svg viewBox="0 0 24 24"><use href="#eye" y="2" width="13" height="8"/><path d="M13 2 Q20 1 21 5 L23 4 L22 10 L16 8 L18 7 Q17 4 13 2 Z" fill="#2f95d8"/><path d="M12 12 H24 V24 H12 Z" fill="#333"/><path d="M15 18 L17 20 L21 15" fill="none" stroke="#fff" stroke-width="1.500"/></svg>
                        <svg viewBox="0 0 24 24"><path d="M0 0 H12 V12 H0 Z" fill="#333"/><path d="M3 6 L5 8 L9 3" fill="none" stroke="#fff" stroke-width="1.500"/><path d="M13 13 H23 V23 H13 Z" fill="none" stroke="#333"/><path d="M15 1 L21 2 L20 4 Q22 5 22 9 Q20 6 18 6 L17 8 Z M9 22 L3 21 L4 19 Q2 18 2 15 Q4 17 6 17 L7 15 Z" fill="#2f95d8"/></svg>
                        <span class="sep"></span>
                        <svg viewBox="0 0 24 24"><use href="#cube" width="13" height="13" class="blue-cube"/><use href="#cube" x="11" y="3" width="12" height="12"/><use href="#cube" x="2" y="10" width="12" height="13"/><use href="#eye" x="10" y="14" width="14" height="9"/></svg>
                        <svg viewBox="0 0 24 24"><use href="#cube" width="13" height="13"/><use href="#cube" x="11" y="0" width="12" height="12"/><use href="#cube" x="2" y="10" width="12" height="13"/><use href="#eye" x="12" y="15" width="12" height="8" class="grey-eye"/></svg>
                        <span class="sep"></span>
                        <svg viewBox="0 0 24 24"><use href="#cube" width="22" height="24"/><use href="#cross" x="11" y="11" width="13" height="13"/></svg>
                        <span class="sep"></span>
                        <svg viewBox="0 0 24 24"><use href="#cube" width="13" height="13" class="green-cube"/><use href="#cube" x="12" y="3" width="12" height="13" class="orange-cube"/><use href="#cube" x="4" y="10" width="12" height="13" class="blue-cube"/><path d="M11 10 L22 23" stroke="#333" stroke-width="2"/></svg>
                        <span class="sep"></span>
                        <svg viewBox="0 0 24 24" class="dim"><path d="M1 14 L16 8 L23 20 L12 23 Z" fill="#999" stroke="#666"/><use href="#cube" width="11" height="12"/></svg>
                        <svg viewBox="0 0 24 24"><path d="M0 11 L14 5 L22 16 L10 22 Z" fill="#f09a1c" stroke="#5a4a2a"/><path d="M18 14 L23 17 L19 23 L15 18 Z" fill="#f09a1c"/></svg>
                        <svg viewBox="0 0 24 24" class="dim"><use href="#cube" width="22" height="24" class="grey-cube"/><use href="#disk" x="12" y="13" width="11" height="11" class="grey-disk"/></svg>
                        <span class="sep"></span>
                        <svg viewBox="0 0 24 24" class="dim"><path d="M3 1 V22 M0 18 L3 22 L6 18 M7 2 H22 M7 7 H19 M7 11 H12" fill="none" stroke="#555" stroke-width="1.500"/><use href="#disk" x="12" y="13" width="11" height="11" class="grey-disk"/></svg>
                    </div>
                </section>

                <section class="page">
                    <h2 class="page-head">Annotation Pages<i class="dots"></i><svg class="x"><use href="#close"/></svg></h2>
                    <div class="page-tabs wide">
                        <button class="on">Text</button><button>Drawing</button><button>Attachments</button><button>Textures</button>
                    </div>
                </section>
                <section class="page">
                    <h2 class="page-head">Measurement Pages<i class="dots"></i><svg class="x"><use href="#close"/></svg></h2>
                    <div class="page-tabs">
                        <button class="on">Distance</button><button>Circle</button><button>Angle</button><button>Info</button><button>Final Part</button><button>Report</button>
                    </div>
                </section>
                <section class="page">
                    <h2 class="page-head">Fix Pages<i class="dots"></i><svg class="x"><use href="#close"/></svg></h2>
                    <div class="page-tabs">
                        <button class="on">Autofix</button><button>Basic</button><button>Hole</button><button>Triangle</button><button>Shell</button><button>Overlap</button><button>Point</button>
                        <span class="scrollers"><button class="off" aria-label="Previous"></button><button aria-label="Next"></button></span>
                    </div>
                </section>
            </aside>
        </main>

        <footer class="statusbar">Ready</footer>
    </div>

    <div class="dialog" role="dialog" aria-label="Fix Wizard">
        <div class="dialog-title">
            <svg width="16" height="16" viewBox="0 0 16 16"><path d="M5 1 H11 V5 H15 V11 H11 V15 H5 V11 H1 V5 H5 Z" fill="#d60f14" stroke="#a00"/></svg>
            <span>Fix Wizard (Part: 3) &gt; Diagnostics</span>
            <button aria-label="Minimize"><svg viewBox="0 0 12 12"><path d="M1 6 H11" stroke="#111"/></svg></button>
            <button aria-label="Maximize"><svg viewBox="0 0 12 12"><path d="M1 1 H11 V11 H1 Z" stroke="#ccc0bc" fill="none"/></svg></button>
            <button aria-label="Close"><svg viewBox="0 0 12 12"><path d="M1 1 L11 11 M11 1 L1 11" stroke="#111" stroke-width="1.300"/></svg></button>
        </div>
        <div class="dialog-body">
            <nav class="wizard-nav">
                <a href="#" class="current"><svg viewBox="0 0 20 22"><use href="#magnifier"/></svg>Diagnostics</a>
                <a href="#"><svg viewBox="0 0 20 22"><path d="M3 5 H12 V17 L3 19 Z M6 3 H15 V16 L6 18 Z M9 3 L18 2 V15 L9 17 Z" fill="#c9dcf5" stroke="#7794c8"/></svg>Combined Fix</a>
                <hr>
                <a href="#"><svg viewBox="0 0 20 22"><use href="#cube" y="1" width="20" height="20" class="lilac"/><path d="M10 9 L19 5 V16 L10 20 Z" fill="#c92228"/></svg>Normals</a>
                <a href="#"><svg viewBox="0 0 20 22"><use href="#cube" x="2" y="2" width="17" height="18" class="lilac"/><path d="M8 6 L18 3 L12 8 Z M9 9 L17 7" fill="#f1e08a" stroke="#a5904a"/></svg>Stitching</a>
                <a href="#"><svg viewBox="0 0 20 22"><use href="#cube" y="1" width="20" height="20" class="lilac"/><path d="M5 4 H8 M11 3 H14 M9 6 H12 M2 9 H5 M6 12 H8 M3 15 H5 M11 11 H14 M15 8 H18 M16 13 H18 M12 16 H15 M7 18 H9" stroke="#16205c" stroke-width="2.500"/></svg>Noise Shells</a>
                <a href="#"><svg viewBox="0 0 20 22"><use href="#cube" y="1" width="20" height="20" class="lilac red-top"/></svg>Holes</a>
                <a href="#"><svg viewBox="0 0 20 22"><use href="#cube" x="1" y="1" width="18" height="20" class="lilac"/><path d="M2 5 L10 21 L18 4 M10 8 L18 15 M2 5 L10 2 L18 4" fill="none" stroke="#3a4aa8"/></svg>Triangles</a>
                <a href="#"><svg viewBox="0 0 20 22"><use href="#cube" x="1" y="1" width="13" height="18" class="lilac"/><use href="#cube" x="5" y="2" width="14" height="19" class="lilac"/></svg>Overlaps</a>
                <a href="#"><svg viewBox="0 0 20 22"><use href="#cube" y="1" width="20" height="20" class="lilac"/></svg>Shells</a>
                <hr>
                <a href="#"><svg viewBox="0 0 20 22"><path d="M5 2 H13 L17 6 V19 H5 Z" fill="#e4f6fb" stroke="#3a9ab8"/><path d="M8 9 H14 M8 12 H14 M8 15 H14" stroke="#1f7a9a"/></svg>Profiles</a>
            </nav>
            <div class="wizard">
                <div class="current-part">
                    <label for="part">Current Part:</label>
                    <div class="part-select">
                        <select id="part"><option>3</option></select>
                        <svg viewBox="0 0 9 6"><path d="M1 1 L4.500 5 L8 1" fill="none" stroke="#555"/></svg>
                    </div>
                    <button class="btn next" disabled>Next</button>
                </div>
                <div class="panel">
                    <fieldset class="advice">
                        <legend>Advice</legend>
                        <p>No more errors are detected. It seems that the part is ok. Note that not all parameters were analysed.</p>
                        <div class="vscroll"><i class="up"></i><i class="down"></i></div>
                    </fieldset>
                    <fieldset class="diag">
                        <legend>Diagnostics</legend>
                        <label class="full"><input type="checkbox">Full Analysis</label>
                        <div class="checks">
                            <label><input type="checkbox" checked><svg><use href="#tick"/></svg><b>0</b>inverted normals detected</label>
                            <label><input type="checkbox" checked><svg><use href="#tick"/></svg><b>0</b>bad edges detected</label>
                            <div class="sub nobox"><svg><use href="#tick"/></svg><b>0</b>bad contours detected</div>
                            <label class="sub"><input type="checkbox" checked><svg><use href="#tick"/></svg><b>0</b>near bad edges detected</label>
                            <label class="sub"><input type="checkbox" checked><svg><use href="#tick"/></svg><b>0</b>planar holes detected</label>
                            <label><input type="checkbox" checked><svg><use href="#tick"/></svg><b>1</b>shells detected</label>
                            <div class="sub nobox"><svg><use href="#tick"/></svg><b>0</b>possible noise shells detected</div>
                            <label><input type="checkbox"><i class="dot"></i><b></b>overlapping triangles detected</label>
                            <label><input type="checkbox"><i class="dot"></i><b></b>intersecting triangles detected</label>
                        </div>
                        <button class="btn update"><svg width="20" height="22"><use href="#magnifier"/></svg><span>Update</span></button>
                    </fieldset>
                </div>
                <div class="dialog-buttons">
                    <button class="btn follow"><svg width="20" height="18" viewBox="0 0 20 18"><path d="M1 5 H10 V1 H13 L19 9 L13 17 H10 V13 H1 Z" fill="#4fc02e" stroke="#1c6a14"/></svg><span>Follow Advice</span></button>
                    <button class="btn">Close</button>
                    <button class="btn">Help</button>
                </div>
            </div>
        </div>
        <svg class="resize" width="11" height="11" viewBox="0 0 11 11"><path d="M0 11 L11 0 M4 11 L11 4 M8 11 L11 8" stroke="#777"/></svg>
    </div>
</body>
</html>
```
FILE: styles.css
```css
* {
    box-sizing: border-box;
}

body {
    margin: 0;
    height: 100vh;
    overflow: hidden;
    background: #fff;
    font: 11px/13px "Open Sans", "Noto Sans", sans-serif;
    color: #111;
}

button, input, select {
    font: inherit;
    color: inherit;
    margin: 0;
    padding: 0;
    border: 0;
    background: none;
}

svg {
    flex: none;
    overflow: visible;
}

.sprite {
    position: absolute;
    width: 0;
    height: 0;
}

.app {
    display: flex;
    flex-direction: column;
    height: 100vh;
}

/* cube colours */
.thick { --sw: 3; }
.blue-cube { --top: #3d9be0; --left: #1874c4; --right: #1f82d6; --line: #163e66; }
.blue-side { --right: #2492ec; }
.sky-line { --line: #4aa8dc; --sw: 2; }
.red-side { --right: #e0372c; }
.red-cube { --top: #c0392b; --left: #c0392b; --right: #a82c22; }
.green-cube { --top: #8bc34a; --left: #7fba42; --right: #6da537; }
.green-top { --top: #7fba42; }
.green-sides { --left: #7fba42; --right: #7fba42; }
.multi { --top: #f59a1c; --left: #2492d8; --right: #7fba42; }
.orange-cube { --top: #f5a02c; --left: #ee931c; --right: #e08a1a; }
.dark-cube { --top: #333; --left: #555; --right: #aaa; }
.grey-cube { --top: #999; --left: #999; --right: #888; --line: #444; }
.rose { --top: #e8cfcf; --left: #d8b8b8; --right: #e3caca; --line: #777; }
.light-line { --line: #555; }
.navy { --top: #4a86bd; --left: #1f4f80; --right: #2a6298; --line: #1c3d60; }
.lilac { --top: #e6ebfa; --left: #c0c9f0; --right: #9aa4dc; --line: #55609c; --sw: 1; }
.red-top { --top: #b01c26; }
.grey-fill { --fill: #b5b5b5; }
.no-fill { --fill: #fff; }
.grey-eye { --eye: #888; }
.grey-disk { --disk: #777; }
.dim { opacity: 0.6; }

.sep {
    width: 1px;
    background: #d4d4d4;
    align-self: stretch;
}

.caret {
    width: 0;
    border: 3px solid transparent;
    border-top: 4px solid #777;
    border-bottom: 0;
}

.caret.blue { border-top-color: #4a6f94; }
.caret.grey { border-top-color: #aaa; }

/* title bar */
.titlebar {
    flex: none;
    height: 28px;
    padding-bottom: 2px;
    display: grid;
    grid-template-columns: 1fr auto 1fr;
    align-items: center;
}

.quick {
    display: flex;
    align-items: center;
    gap: 6px;
    padding-left: 8px;
}

.quick svg {
    width: 17px;
    height: 20px;
}

.quick .sep {
    margin: 0 -1px;
}

.quick .caret {
    margin-left: -4px;
}

.picked {
    background: #9cc5e8;
    height: 22px;
    padding: 1px 3px;
    margin-right: -3px;
}

.search {
    width: 200px;
    height: 20px;
    padding: 0 3px;
    margin-left: -2px;
    border: 1px solid #999;
}

.search::placeholder {
    color: #777;
    opacity: 1;
}

.win-buttons {
    display: flex;
    justify-content: flex-end;
    gap: 26px;
    padding-right: 14px;
}

.win-buttons button {
    display: flex;
}

.win-buttons svg {
    width: 10px;
    height: 10px;
}

/* ribbon tabs */
.tabs {
    flex: none;
    display: flex;
    height: 24px;
    padding: 0 6px 0 1px;
    border-bottom: 1px solid #d0d0d0;
}

.tab {
    padding: 0 10px;
    color: #000;
}

.tab.file {
    width: 51px;
    background: #2697ff;
    color: #fff;
}

.tab.tools-tab { padding: 0 13px; }
.tab.analyze { padding: 0 14px; }
.tab.options { padding: 0 20px; }

.tab.active {
    border: 1px solid #d0d0d0;
    border-bottom: 0;
    background: #fff;
    color: #2b7cc0;
    margin-bottom: -1px;
}

.tabs-right {
    margin-left: auto;
    display: flex;
    align-items: center;
    gap: 6px;
}

/* ribbon */
.ribbon {
    flex: none;
    display: flex;
    height: 91px;
    border: 1px solid #d0d0d0;
    border-top: 0;
    color: #3c3c3c;
}

.group {
    display: flex;
    flex-direction: column;
    justify-content: space-between;
    padding: 7px 6px 5px;
    position: relative;
}

.group.first {
    padding-left: 8px;
}

.group.last .tools {
    gap: 1px;
}

.group::after {
    content: "";
    position: absolute;
    right: 0;
    top: 2px;
    bottom: 2px;
    width: 1px;
    background: #d0d0d0;
}

.ribbon .tools {
    display: flex;
}

.group-title {
    text-align: center;
}

.big {
    display: flex;
    flex-direction: column;
    align-items: center;
    padding: 0 5px;
    min-width: 40px;
    line-height: 13px;
}

.big svg {
    width: 32px;
    height: 33px;
    margin-bottom: 2px;
}

.small-list {
    display: flex;
    flex-direction: column;
    margin: -3px 0 -5px 2px;
    padding: 0 12px;
    border-left: 1px solid #d8d8d8;
}

.small-list:last-child {
    margin-left: 0;
    padding: 0 13px 0 11px;
}

.small {
    display: flex;
    align-items: center;
    gap: 5px;
    height: 22px;
}

.small svg {
    width: 22px;
    height: 22px;
}

/* marking toolbar */
.markbar {
    flex: none;
    display: flex;
    align-items: center;
    gap: 7px;
    height: 35px;
    padding: 6px 4px 5px;
}

.markbar svg {
    width: 24px;
    height: 24px;
}

.markbar .sep {
    margin: 0 -1px;
}

.grip {
    width: 2px;
    height: 22px;
    margin-right: 2px;
    background: repeating-linear-gradient(#222 0 2px, #fff 2px 4px);
}

/* workspace */
.workspace {
    flex: 1;
    min-height: 0;
    display: flex;
}

.viewport {
    flex: 1;
    position: relative;
    background: #badefb;
    display: flex;
    flex-direction: column;
    justify-content: flex-end;
    overflow: hidden;
}

.axes {
    position: absolute;
    left: 420px;
    top: 450px;
    font: 14px "DejaVu Sans", sans-serif;
}

.wcs {
    position: absolute;
    left: 444px;
    top: 664px;
    padding: 3px 2px;
    border: 1px solid #24374f;
    font: 13px/14px "Liberation Sans", sans-serif;
}

.part {
    position: absolute;
    left: 1180px;
    top: 602px;
}

.mini-axes {
    position: absolute;
    right: 18px;
    bottom: 172px;
    font: 14px "Liberation Sans", sans-serif;
}

.ruler {
    display: flex;
    position: relative;
    height: 37px;
    border-top: 1px solid #5c6f7c;
    background: linear-gradient(#e9f4fe, #c3dff9);
    font: 14px "Liberation Sans", sans-serif;
}

.mark {
    width: 10.244%;
    flex: none;
}

.mark span {
    margin-left: -5px;
}

.mark.zero span {
    margin-left: 1px;
}

.mark svg {
    display: block;
    width: 100%;
    height: 14px;
    margin-bottom: 3px;
}

.unit {
    position: absolute;
    right: 11px;
    top: 9px;
}

.statusbar {
    flex: none;
    height: 18px;
    padding: 3px 6px;
    background: #2697ff;
    color: #fff;
}

/* side pages */
.pages {
    width: 390px;
    flex: none;
    margin-top: -34px;
    padding-left: 5px;
    background: #fff;
    display: flex;
    flex-direction: column;
    position: relative;
}

.page {
    border-top: 2px solid #ececec;
    border-left: 1px solid #ececec;
    padding-left: 2px;
}

.page.parts {
    flex: 1;
    display: flex;
    flex-direction: column;
}

.page-head {
    display: flex;
    align-items: center;
    margin: 0;
    height: 25px;
    padding: 0 8px 3px 5px;
    font: inherit;
}

.page-head::before {
    content: "";
    width: 0;
    border: 6px solid transparent;
    border-left: 7px solid #000;
    border-right: 0;
    margin-right: 13px;
}

.page-head.open::before {
    border: 6px solid transparent;
    border-top: 7px solid #000;
    border-bottom: 0;
    margin: 0 9px 0 -1px;
}

.dots {
    flex: 1;
    height: 5px;
    margin: 0 13px 0 5px;
    background:
        conic-gradient(from 270deg at 1px 1px, #222 90deg, transparent 0) 0 0 / 4px 2px,
        conic-gradient(from 270deg at 1px 1px, #222 90deg, transparent 0) 2px 1px / 4px 2px;
}

.page-head .pin {
    width: 9px;
    height: 7px;
    margin: 0 12px 0 -3px;
}

.page-head .x {
    width: 8px;
    height: 8px;
}

.page-tabs {
    display: flex;
    position: relative;
    height: 20px;
    overflow: hidden;
}

.page-tabs > button {
    flex: none;
    padding: 0 12px;
}

.page-tabs > .on {
    border: 1px solid #999;
    border-bottom: 0;
    padding: 0 10px 3px;
}

.page-tabs.wide > button {
    min-width: 72px;
}

.scrollers {
    position: absolute;
    right: 0;
    top: 0;
    display: flex;
    background: #fff;
}

.scrollers button {
    width: 16px;
    height: 20px;
    border: 1px solid #999;
    display: grid;
    place-items: center;
}

.scrollers button::before {
    content: "";
    border: 6px solid transparent;
    border-left: 6px solid #000;
    border-right: 0;
}

.scrollers .off {
    border-color: #e4e4e4;
}

.scrollers .off::before {
    border: 6px solid transparent;
    border-right: 6px solid #999;
    border-left: 0;
}

.visual {
    display: flex;
    justify-content: space-between;
    margin: 3px 6px 6px 2px;
    padding: 10px 8px 7px 9px;
    border: 1px solid #e4e4e4;
}

.visual legend {
    padding: 0 1px;
    margin-left: -2px;
}

.modes {
    display: flex;
    flex-direction: column;
    gap: 6px;
}

.mode {
    display: flex;
    align-items: center;
    gap: 6px;
}

.mode button {
    display: flex;
    align-items: center;
    gap: 5px;
    width: 33px;
    height: 22px;
    padding-left: 4px;
    border: 1px solid #999;
}

.mode svg {
    width: 16px;
    height: 17px;
}

.mode .caret {
    margin-left: -2px;
}

.orient {
    display: flex;
    align-items: center;
    gap: 6px;
    width: 97px;
    height: 86px;
    padding-left: 5px;
    border: 1px solid #999;
}

.scene-row {
    display: flex;
    align-items: center;
    justify-content: space-between;
    padding-right: 5px;
    margin: 4px 0 7px;
}

.scene {
    display: flex;
    align-items: center;
    width: 270px;
    height: 22px;
    margin-left: 2px;
    padding: 0 5px;
    border: 1px solid #888;
}

.scene svg {
    width: 18px;
    height: 16px;
    margin-left: -2px;
}

.scene select {
    flex: 1;
    appearance: none;
    padding-left: 3px;
    outline: 0;
}

.list {
    flex: 1;
    display: flex;
    flex-direction: column;
    justify-content: space-between;
    margin: 0 5px 0 3px;
    border: 1px solid #777;
}

.list table {
    width: 100%;
    table-layout: fixed;
    border-collapse: collapse;
}

.list th {
    height: 20px;
    padding: 0 0 0 4px;
    overflow: hidden;
    white-space: nowrap;
    text-align: left;
    font-weight: normal;
    border-right: 1px solid #e4e4e4;
    border-bottom: 1px solid #eee;
}

.list .w31 { padding-left: 1px; }
.list th:last-child { border-right: 0; }

.list th svg {
    vertical-align: 4px;
}

.list td {
    height: 20px;
    padding: 0 0 0 5px;
}

.list td svg {
    display: block;
}

.list td.mid { padding-left: 10px; }
.list td.name { padding-left: 13px; }

.w23 { width: 23px; }
.w25 { width: 25px; }
.w26 { width: 26px; }
.w29 { width: 29px; }
.w31 { width: 31px; }
.w38 { width: 38px; }
.w119 { width: 119px; }

.square {
    appearance: none;
    width: 12px;
    height: 12px;
    border: 1px solid #555;
    display: grid;
    place-items: center;
}

.square:checked::before {
    content: "";
    width: 6px;
    height: 3px;
    border: solid #333;
    border-width: 0 0 1px 1px;
    transform: rotate(-45deg);
}

.hscroll {
    display: flex;
    height: 17px;
    border-top: 1px solid #888;
}

.hscroll button {
    width: 17px;
    display: grid;
    place-items: center;
}

.hscroll button::before {
    content: "";
    border: 5px solid transparent;
}

.hscroll .left { border-right: 1px solid #888; }
.hscroll .left::before { border-right-color: #555; border-left-width: 0; }
.hscroll .right { border-left: 1px solid #888; }
.hscroll .right::before { border-left-color: #555; border-right-width: 0; }

.thumb {
    flex: 1;
    border-right: 1px solid #888;
}

.track {
    width: 40px;
    background: #eee;
}

.part-tools {
    display: flex;
    gap: 6px;
    padding: 11px 10px 10px 7px;
    justify-content: space-between;
}

.part-tools svg {
    width: 24px;
    height: 24px;
}

/* wizard dialog */
.dialog {
    position: absolute;
    right: 376px;
    top: 216px;
    width: 615px;
    height: 988px;
    display: flex;
    flex-direction: column;
    background: #f0f0f0;
    border: 1px solid #9aa4ac;
    border-radius: 7px;
    box-shadow: 0 20px 40px rgba(0, 0, 0, 0.4), 0 2px 12px rgba(0, 0, 0, 0.2);
    overflow: hidden;
}

.dialog-title {
    display: flex;
    align-items: center;
    height: 28px;
    padding: 0 16px 0 8px;
    gap: 4px;
    background: #f8f1ef;
    font-size: 12px;
}

.dialog-title span {
    flex: 1;
}

.dialog-title button {
    display: flex;
    margin-left: 29px;
}

.dialog-title button svg {
    width: 12px;
    height: 12px;
}

.dialog-body {
    flex: 1;
    display: flex;
    gap: 8px;
    padding: 4px 7px 4px 4px;
}

.wizard-nav {
    width: 121px;
    padding: 3px 5px 0 2px;
    background: #fff;
    border: 1px solid #808080;
    box-shadow: inset 1px 1px #696969;
}

.wizard-nav a {
    display: flex;
    align-items: center;
    gap: 3px;
    height: 21px;
    padding-left: 3px;
    color: #111;
    text-decoration: none;
}

.wizard-nav a.current {
    background: linear-gradient(90deg, #fff 25px, #efefef 0);
}

.wizard-nav svg {
    width: 20px;
    height: 20px;
}

.wizard-nav hr {
    margin: 10px 0;
    border: 0;
    border-top: 1px solid #777;
}

.wizard {
    flex: 1;
    display: flex;
    flex-direction: column;
}

.current-part {
    display: flex;
    padding-left: 2px;
    gap: 5px;
}

.current-part label {
    width: 69px;
}

.part-select {
    flex: 1;
    display: flex;
    align-items: center;
    height: 21px;
    padding-right: 4px;
    background: #fdfdfd;
    border: 1px solid #ccc;
    border-radius: 2px;
}

.part-select select {
    flex: 1;
    appearance: none;
    padding-left: 3px;
    outline: 0;
}

.part-select svg {
    width: 9px;
    height: 6px;
}

.btn {
    width: 58px;
    height: 25px;
    background: #fdfdfd;
    border: 1px solid #ccc;
    border-radius: 4px;
}

.btn.next {
    width: 43px;
    height: 21px;
    margin-top: 1px;
    border-color: #e4e4e4;
    color: #888;
}

.panel {
    margin-top: 11px;
    padding: 19px 9px 11px;
    background: linear-gradient(#fdfdfd, #f0f0f0);
    border: 1px solid #a8a8a8;
    border-radius: 4px;
}

.panel fieldset {
    margin: 0;
    border: 1px solid #dcdcdc;
}

.panel legend {
    padding: 0 2px;
}

.advice {
    display: flex;
    justify-content: space-between;
    padding: 7px 9px 8px 12px;
}

.advice p {
    margin: 0;
    width: 390px;
}

.vscroll {
    width: 16px;
    height: 46px;
    background: #f0f0f0;
    display: flex;
    flex-direction: column;
    justify-content: space-between;
    align-items: center;
    padding: 6px 0;
}

.vscroll i {
    border: 4px solid transparent;
}

.vscroll .up { border-bottom: 7px solid #999; border-top: 0; }
.vscroll .down { border-top: 7px solid #999; border-bottom: 0; }

.panel .diag {
    margin-top: 4px;
    padding: 9px 9px 8px;
    display: flex;
    flex-direction: column;
}

.advice legend {
    margin-left: -5px;
}

.diag legend {
    margin-left: -2px;
}

.diag input {
    appearance: none;
    width: 13px;
    height: 13px;
    border: 1px solid #666;
    border-radius: 3px;
    background: #f8f8f8;
    display: grid;
    place-items: center;
}

.diag input:checked {
    background: #0f5fa8;
    border-color: #0f5fa8;
}

.diag input:checked::before {
    content: "";
    width: 5px;
    height: 2px;
    border: solid #fff;
    border-width: 0 0 1px 1px;
    transform: rotate(-45deg);
}

.full {
    display: flex;
    align-items: center;
    gap: 3px;
}

.checks {
    margin-top: 12px;
    padding-left: 20px;
}

.checks > * {
    display: flex;
    align-items: center;
    height: 20px;
}

.checks .sub { padding-left: 20px; }
.checks .nobox { padding-left: 33px; }

.checks svg {
    width: 16px;
    height: 17px;
    margin: 0 4px 0 7px;
}

.checks .dot {
    width: 3px;
    height: 3px;
    margin: 0 10px 0 14px;
    background: #2a3ca8;
}

.checks b {
    width: 45px;
}

.btn.update {
    display: flex;
    align-items: center;
    width: 111px;
    height: 24px;
    margin-top: 12px;
    align-self: flex-end;
    border-color: #2a6a94;
    padding-left: 2px;
}

.btn span {
    flex: 1;
}

.update svg {
    width: 20px;
    height: 20px;
}

.update span {
    padding-right: 6px;
}

.dialog-buttons {
    margin-top: auto;
    display: flex;
    justify-content: flex-end;
    gap: 7px;
    padding-right: 12px;
}

.btn.follow {
    display: flex;
    align-items: center;
    width: 149px;
    padding-left: 3px;
}

.follow span {
    padding-right: 4px;
}

.resize {
    position: absolute;
    right: 0;
    bottom: 0;
}
```
